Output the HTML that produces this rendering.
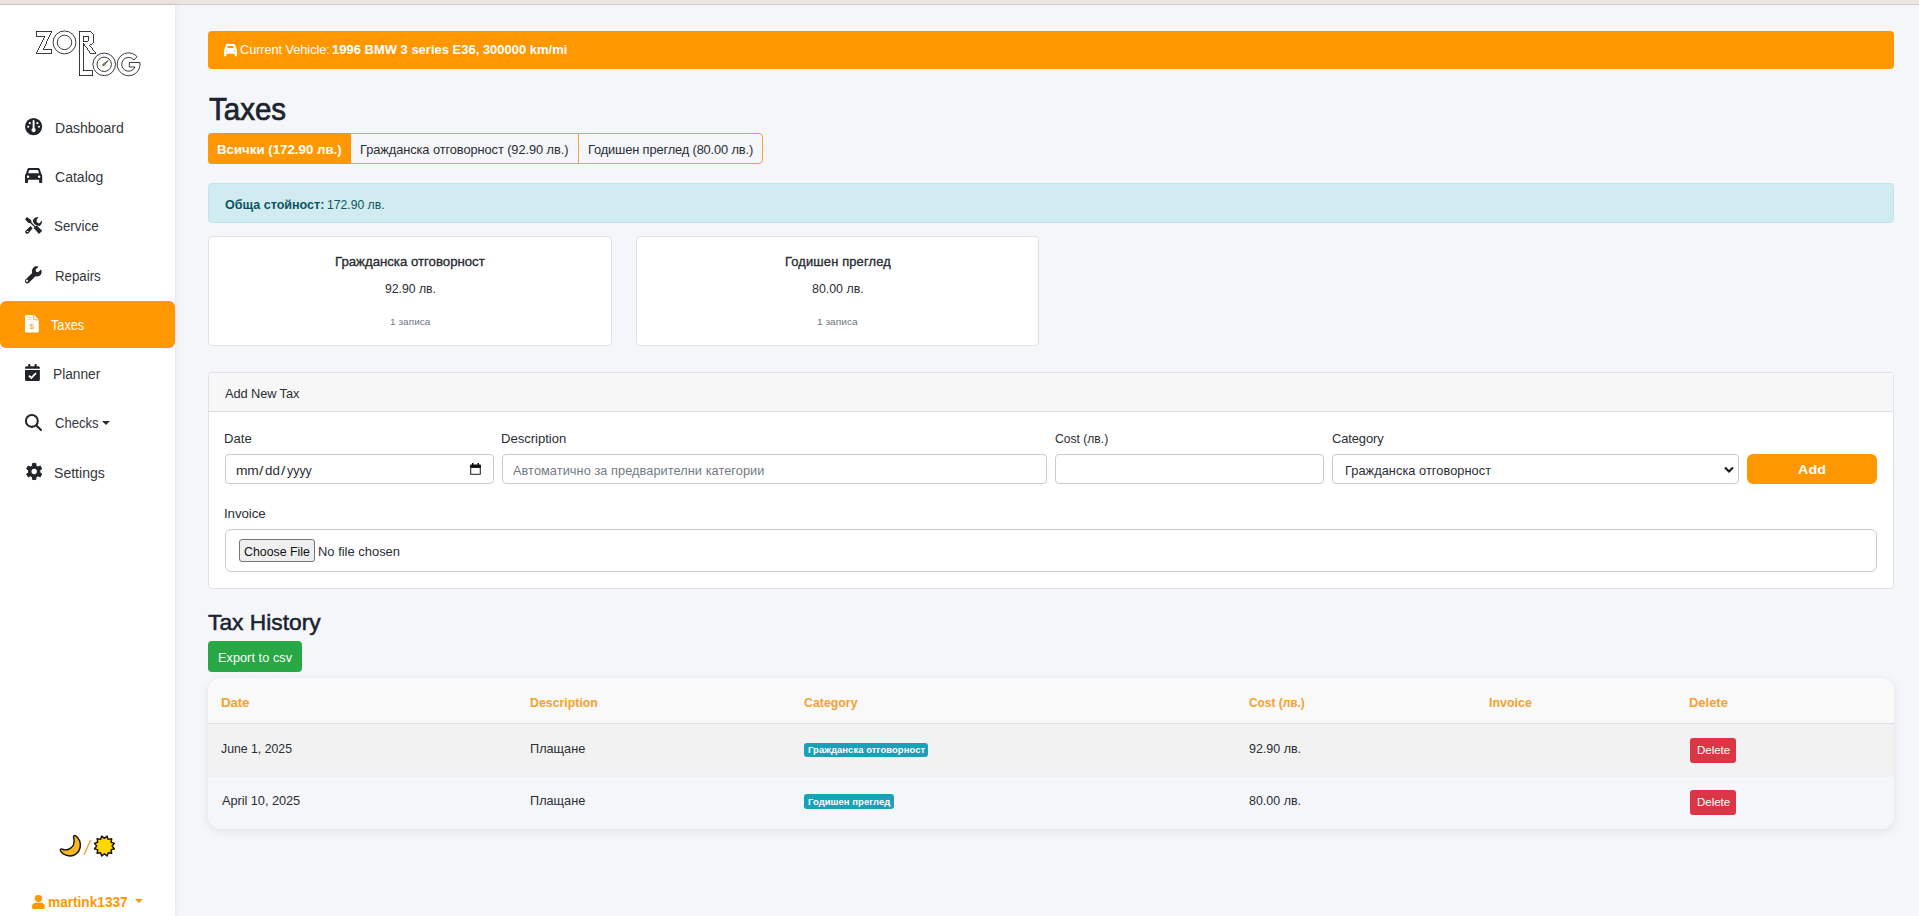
<!DOCTYPE html>
<html lang="en"><head><meta charset="utf-8"><title>Taxes</title>
<style>
*{box-sizing:border-box;margin:0;padding:0}
html,body{width:1919px;height:916px;overflow:hidden;background:#f4f6fa;font-family:"Liberation Sans",sans-serif}
.b{position:absolute}
.i{position:absolute;display:block;overflow:visible}
.t{position:absolute;white-space:pre;line-height:0;transform-origin:0 50%;font-family:"Liberation Sans",sans-serif}
</style></head>
<body>
<div class="b" style="left:0;top:0;width:1919px;height:5px;background:#ece4e1;border-bottom:1px solid #d2cac9"></div>
<div class="b" style="left:0;top:5px;width:175px;height:911px;background:#fff;box-shadow:1px 0 6px rgba(0,0,0,.07)"></div>
<div class="b" style="left:0;top:301px;width:175px;height:47px;background:#ff9800;border-radius:6px"></div>
<div class="b" style="left:208px;top:31px;width:1686px;height:38px;background:#ff9800;border-radius:4px"></div>
<div class="b" style="left:208px;top:133px;width:555px;height:31px;border:1px solid #f3a536;border-radius:4px"></div>
<div class="b" style="left:208px;top:133px;width:143px;height:31px;background:#ff9800;border-radius:4px 0 0 4px"></div>
<div class="b" style="left:578px;top:133px;width:1px;height:31px;background:#f3a536"></div>
<div class="b" style="left:208px;top:183px;width:1686px;height:40px;background:#d1ecf1;border:1px solid #bee5eb;border-radius:4px"></div>
<div class="b" style="left:208px;top:236px;width:404px;height:110px;background:#fff;border:1px solid #e0e2e6;border-radius:4px"></div>
<div class="b" style="left:636px;top:236px;width:403px;height:110px;background:#fff;border:1px solid #e0e2e6;border-radius:4px"></div>
<div class="b" style="left:208px;top:372px;width:1686px;height:217px;background:#fff;border:1px solid #e0e2e6;border-radius:4px;overflow:hidden"><div style="height:39px;background:#f7f7f7;border-bottom:1px solid #dcdfe3"></div></div>
<div class="b" style="left:225px;top:454px;width:269px;height:30px;background:#fff;border:1px solid #c9ccd0;border-radius:4px"></div>
<div class="b" style="left:502px;top:454px;width:545px;height:30px;background:#fff;border:1px solid #c9ccd0;border-radius:4px"></div>
<div class="b" style="left:1055px;top:454px;width:269px;height:30px;background:#fff;border:1px solid #c9ccd0;border-radius:4px"></div>
<div class="b" style="left:1332px;top:454px;width:407px;height:30px;background:#fff;border:1px solid #c9ccd0;border-radius:4px"></div>
<div class="b" style="left:1747px;top:454px;width:130px;height:30px;background:#ff9800;border-radius:6px"></div>
<div class="b" style="left:225px;top:529px;width:1652px;height:43px;background:#fff;border:1px solid #c9ccd0;border-radius:6px"></div>
<div class="b" style="left:239px;top:539px;width:76px;height:23px;background:#efefef;border:1px solid #767676;border-radius:3px"></div>
<svg class="i" style="left:470px;top:463px;width:11px;height:12px" viewBox="0 0 22 24"><path fill="#111" d="M4 0h3v3h8V0h3v3h2a2 2 0 0 1 2 2v5H0V5a2 2 0 0 1 2-2h2z"/><path fill="#4a4a4a" d="M0 9h22v13a2 2 0 0 1-2 2H2a2 2 0 0 1-2-2zM2.6 9.5v11.8h16.8V9.5z"/></svg>
<svg class="i" style="left:1724px;top:465.5px;width:10px;height:7.5px" viewBox="0 0 20 15"><path fill="none" stroke="#1b1b1b" stroke-width="4.4" d="M2 3l8 8 8-8"/></svg>
<div class="b" style="left:208px;top:641px;width:94px;height:31px;background:#28a745;border-radius:4px"></div>
<div class="b" style="left:208px;top:678px;width:1686px;height:151px;border-radius:13px;overflow:hidden;box-shadow:0 2px 10px rgba(0,0,0,.09)"><div style="height:46px;background:#f9f9f9;border-bottom:1px solid #dcdfe3"></div><div style="height:53px;background:#f2f2f2;border-bottom:1px solid #f0f1f3"></div><div style="height:52px;background:#f5f6fa"></div></div>
<div class="b" style="left:804px;top:743px;width:124px;height:14px;background:#17a2b8;border-radius:3px"></div>
<div class="b" style="left:804px;top:794px;width:90px;height:15px;background:#17a2b8;border-radius:3px"></div>
<div class="b" style="left:1690px;top:738px;width:46px;height:25px;background:#dc3545;border-radius:3px"></div>
<div class="b" style="left:1690px;top:790px;width:46px;height:25px;background:#dc3545;border-radius:3px"></div>
<div class="b" style="left:102.3px;top:420.8px;width:0;height:0;border-left:4.1px solid transparent;border-right:4.1px solid transparent;border-top:4.6px solid #2a2e33"></div>
<div class="b" style="left:134.9px;top:898.7px;width:0;height:0;border-left:4px solid transparent;border-right:4px solid transparent;border-top:4.5px solid #ff9800"></div>
<svg class="i" style="left:25.4px;top:117.8px;width:17.2px;height:17.2px;color:#212529" viewBox="0 0 100 100" preserveAspectRatio="none"><circle cx="50" cy="50" r="50" fill="currentColor"/>
<rect x="44.5" y="12" width="11" height="52" rx="5" fill="#fff"/>
<circle cx="50" cy="70" r="12.5" fill="#fff"/>
<circle cx="28" cy="30" r="6.2" fill="#fff"/>
<circle cx="72" cy="30" r="6.2" fill="#fff"/>
<circle cx="18.5" cy="51" r="6.2" fill="#fff"/>
<circle cx="81.5" cy="51" r="6.2" fill="#fff"/></svg>
<svg class="i" style="left:25.4px;top:167.9px;width:17.2px;height:15px;color:#212529" viewBox="10 5 505 455" preserveAspectRatio="none"><path fill="currentColor" d="M125 5H395Q430 5 445 40L490 185Q515 195 515 240V440Q515 460 495 460H445Q425 460 425 440V360H100V440Q100 460 80 460H30Q10 460 10 440V240Q10 195 35 185L80 40Q95 5 125 5Z"/>
<path fill="#fff" class="cw" d="M150 62H375Q390 62 395 77L420 165H105L130 77Q135 62 150 62Z"/>
<circle class="cw" cx="100" cy="270" r="36" fill="#fff"/><circle class="cw" cx="425" cy="270" r="36" fill="#fff"/></svg>
<svg class="i" style="left:25.4px;top:216.9px;width:17.2px;height:17px;color:#212529" viewBox="165 210 525 520" preserveAspectRatio="none"><path fill="currentColor" d="M165 282L228 212L352 308L366 372L330 400L262 388Z"/>
<path stroke="currentColor" stroke-width="40" d="M320 362L480 520"/>
<path fill="currentColor" stroke="currentColor" stroke-width="14" stroke-linejoin="round" d="M436 548L522 470L684 630L594 722Z"/>
<path fill="currentColor" d="M578 215Q470 203 415 290Q385 350 438 408L468 438Q540 470 612 482Q692 420 690 336L655 343Q640 395 585 405Q530 390 515 340Q515 270 578 215Z"/>
<path fill="currentColor" d="M335 486L398 556L268 712Q205 745 175 692Q160 650 192 622Z"/>
<ellipse cx="245" cy="655" rx="30" ry="17" transform="rotate(-8 245 655)" fill="#fff"/></svg>
<svg class="i" style="left:25.4px;top:265.9px;width:17.2px;height:17.2px;color:#212529" viewBox="0 -8 536 528" preserveAspectRatio="none"><path fill="currentColor" d="M507 114c-3-10-15-13-22-6l-74 74-68-11-11-68 74-74c7-7 4-19-6-22C352-5 297 9 258 48c-42 42-53 103-35 156L21 406c-28 28-28 74 0 102s74 28 102 0l202-202c53 18 113 6 156-36 39-39 52-94 26-156zM64 480c-20 0-34-14-34-32s14-32 34-32 34 14 34 32-14 32-34 32z"/></svg>
<svg class="i" style="left:25px;top:314.7px;width:13.8px;height:17.6px;color:#fff" viewBox="0 0 384 512" preserveAspectRatio="none"><path fill="currentColor" d="M232 0H40C18 0 0 18 0 40v432c0 22 18 40 40 40h304c22 0 40-18 40-40V152H256c-14 0-24-10-24-24V0z"/>
<path fill="currentColor" d="M254 2v112c0 8 6 14 14 14h114L254 2z"/>
<rect x="76" y="66" width="92" height="22" rx="6" fill="#ff9800" opacity=".55"/>
<rect x="76" y="124" width="92" height="22" rx="6" fill="#ff9800" opacity=".55"/>
<text x="192" y="408" font-family="Liberation Sans, sans-serif" font-size="230" text-anchor="middle" fill="#ff9800">$</text></svg>
<svg class="i" style="left:25.4px;top:364px;width:14.9px;height:17.1px;color:#212529" viewBox="0 0 448 512" preserveAspectRatio="none"><path fill="currentColor" d="M0 176h448v288c0 26-22 48-48 48H48c-26 0-48-22-48-48V176z"/>
<path fill="currentColor" d="M400 64h-48V16c0-9-7-16-16-16h-32c-9 0-16 7-16 16v48H160V16c0-9-7-16-16-16h-32c-9 0-16 7-16 16v48H48C22 64 0 86 0 112v32h448v-32c0-26-22-48-48-48z"/>
<path fill="none" stroke="#fff" stroke-width="52" stroke-linecap="butt" stroke-linejoin="miter" d="M118 348l72 70 140-142"/></svg>
<svg class="i" style="left:25.4px;top:414px;width:17px;height:17.1px;color:#212529" viewBox="225 215 520 520" preserveAspectRatio="none"><circle cx="435" cy="425" r="182" fill="none" stroke="currentColor" stroke-width="62"/>
<path d="M572 562L714 704" stroke="currentColor" stroke-width="64" stroke-linecap="round"/></svg>
<svg class="i" style="left:25.8px;top:463.2px;width:16.4px;height:16.9px;color:#212529" viewBox="0 0 512 512" preserveAspectRatio="none"><path fill="currentColor" stroke="currentColor" stroke-width="30" stroke-linejoin="round" d="M198.3 87.6 L206.3 11.0 L305.7 11.0 L313.7 87.6 L373.0 121.9 L443.4 90.5 L493.0 176.5 L430.7 221.8 L430.7 290.2 L493.0 335.5 L443.4 421.5 L373.0 390.1 L313.7 424.4 L305.7 501.0 L206.3 501.0 L198.3 424.4 L139.0 390.1 L68.6 421.5 L19.0 335.5 L81.3 290.2 L81.3 221.8 L19.0 176.5 L68.6 90.5 L139.0 121.9Z"/><circle cx="256" cy="256" r="84" fill="#fff"/></svg>
<svg class="i" style="left:32px;top:895px;width:12.8px;height:13.9px;color:#ff9800" viewBox="0 0 448 512" preserveAspectRatio="none"><circle cx="224" cy="128" r="128" fill="currentColor"/>
<path fill="currentColor" d="M134 288h180c74 0 134 60 134 134v42c0 26-22 48-48 48H48c-26 0-48-22-48-48v-42c0-74 60-134 134-134z"/></svg>
<svg class="i" style="left:223.9px;top:43.9px;width:13px;height:12.2px;color:#fff" viewBox="10 5 505 455" preserveAspectRatio="none"><path fill="currentColor" d="M125 5H395Q430 5 445 40L490 185Q515 195 515 240V440Q515 460 495 460H445Q425 460 425 440V372H100V440Q100 460 80 460H30Q10 460 10 440V240Q10 195 35 185L80 40Q95 5 125 5Z"/>
<path fill="#ff9800" d="M165 82H360Q372 82 376 94L392 150H133L149 94Q153 82 165 82Z"/>
<ellipse cx="102" cy="262" rx="20" ry="30" fill="#ff9800" opacity=".8"/><ellipse cx="423" cy="262" rx="20" ry="30" fill="#ff9800" opacity=".8"/></svg>
<svg class="i" style="left:0;top:0;width:175px;height:110px" viewBox="0 0 175 110" fill="#fff" stroke="#0a0a0a" stroke-width=".8" stroke-linejoin="miter">
<path shape-rendering="crispEdges" d="M36 31.2H51.9L43.3 49.3H51.9V53.3H36.2L44.7 36.4H36Z"/>
<circle cx="64.5" cy="42.4" r="11.45"/><circle cx="64.5" cy="42.4" r="7.2"/>
<path shape-rendering="crispEdges" d="M79 31.3H87.7C91.5 31.3 94 34.5 94 38.6C94 42 92.5 44.2 89.8 45.3L95.8 53.3H90.4L83.4 43.2V70.6H92.5V75.6H79Z"/>
<path shape-rendering="crispEdges" d="M83.4 36.2H87.4C88.6 36.2 88.9 37.6 88.9 38.8C88.9 40.3 88.4 41.5 87.4 41.5H83.4Z"/>
<circle cx="104.2" cy="64.35" r="11.3"/><circle cx="104.2" cy="64.3" r="7.2"/>
<path d="M102.3 64.7L108.3 60.5L103.7 66.1Z" fill="#b98a4a" stroke="#1a1208" stroke-width=".55"/>
<path d="M137.07 56.67A11.4 11.4 0 1 0 139.86 62.5H129.3V67H134.95A6.9 6.9 0 1 1 134.04 60.05Z"/>
</svg>
<svg class="i" style="left:59.9px;top:835.4px;width:21.3px;height:21.5px" viewBox="140 150 620 625"><path d="M585 165C700 230 760 380 725 520C690 680 540 780 390 755C280 740 190 680 150 600C140 570 180 545 215 565C330 610 470 560 530 440C560 370 560 290 535 210C525 180 555 150 585 165Z" fill="#f5b825" stroke="#1c1203" stroke-width="42" stroke-linejoin="round"/></svg>
<svg class="i" style="left:0;top:820px;width:175px;height:50px" viewBox="0 820 175 50"><path d="M83.9 855L90.7 839.9" stroke="#f7a83a" stroke-width="1.5"/><path d="M107.07 836.10 L108.25 839.38 L111.68 838.77 L111.07 842.20 L114.35 843.38 L112.10 846.05 L114.35 848.72 L111.07 849.90 L111.68 853.33 L108.25 852.72 L107.07 856.00 L104.40 853.75 L101.73 856.00 L100.55 852.72 L97.12 853.33 L97.73 849.90 L94.45 848.72 L96.70 846.05 L94.45 843.38 L97.73 842.20 L97.12 838.77 L100.55 839.38 L101.73 836.10 L104.40 838.35Z" fill="#ffd600" stroke="#1c1203" stroke-width="1.45" stroke-linejoin="round"/></svg>

<span class="t" id="t0" style="left:54.52px;top:128px;font-size:14.0px;font-weight:400;color:#33373c;letter-spacing:0.000px;transform:scaleX(1.0033)">Dashboard</span>
<span class="t" id="t1" style="left:54.74px;top:177px;font-size:14.0px;font-weight:400;color:#33373c;letter-spacing:0.000px;transform:scaleX(1.0031)">Catalog</span>
<span class="t" id="t2" style="left:54.41px;top:226px;font-size:14.0px;font-weight:400;color:#33373c;letter-spacing:0.000px;transform:scaleX(0.9557)">Service</span>
<span class="t" id="t3" style="left:54.59px;top:276px;font-size:14.0px;font-weight:400;color:#33373c;letter-spacing:0.000px;transform:scaleX(0.9483)">Repairs</span>
<span class="t" id="t4" style="left:51.00px;top:325px;font-size:14.0px;font-weight:400;color:#fff;letter-spacing:0.000px;transform:scaleX(0.9048)">Taxes</span>
<span class="t" id="t5" style="left:52.55px;top:374px;font-size:14.0px;font-weight:400;color:#33373c;letter-spacing:0.000px;transform:scaleX(0.9802)">Planner</span>
<span class="t" id="t6" style="left:54.88px;top:423px;font-size:14.0px;font-weight:400;color:#33373c;letter-spacing:0.000px;transform:scaleX(0.9347)">Checks</span>
<span class="t" id="t7" style="left:54.44px;top:473px;font-size:14.0px;font-weight:400;color:#33373c;letter-spacing:0.000px;transform:scaleX(1.0046)">Settings</span>
<span class="t" id="t8" style="left:47.80px;top:902px;font-size:14px;font-weight:700;color:#ff9800;letter-spacing:0.000px;transform:scaleX(0.9746)">martink1337</span>
<span class="t" id="t9" style="left:239.71px;top:50px;font-size:12.5px;font-weight:400;color:#fff;letter-spacing:-0.063px;transform:scaleX(1.0206)">Current Vehicle:</span>
<span class="t" id="t10" style="left:331.60px;top:50px;font-size:12.5px;font-weight:700;color:#fff;letter-spacing:0.000px;transform:scaleX(1.0390)">1996 BMW 3 series E36, 300000 km/mi</span>
<span class="t" id="t11" style="left:208.66px;top:109px;font-size:32px;font-weight:400;color:#1b2230;letter-spacing:0.000px;transform:scaleX(0.9214);-webkit-text-stroke:0.7px #1b2230">Taxes</span>
<span class="t" id="t12" style="left:216.70px;top:150px;font-size:12.7px;font-weight:700;color:#fff;letter-spacing:0.000px;transform:scaleX(1.0459)">Всички (172.90 лв.)</span>
<span class="t" id="t13" style="left:360.43px;top:150px;font-size:12.7px;font-weight:400;color:#2a2e33;letter-spacing:-0.078px;transform:scaleX(1.0105)">Гражданска отговорност (92.90 лв.)</span>
<span class="t" id="t14" style="left:587.93px;top:150px;font-size:12.7px;font-weight:400;color:#2a2e33;letter-spacing:-0.142px;transform:scaleX(1.0123)">Годишен преглед (80.00 лв.)</span>
<span class="t" id="t15" style="left:225.04px;top:205px;font-size:12.7px;font-weight:700;color:#0c5460;letter-spacing:0.000px;transform:scaleX(0.9886)">Обща стойност:</span>
<span class="t" id="t16" style="left:326.75px;top:205px;font-size:12.7px;font-weight:400;color:#0c5460;letter-spacing:0.000px;transform:scaleX(0.9596)">172.90 лв.</span>
<span class="t" id="t17" style="left:334.74px;top:262px;font-size:12.7px;font-weight:400;color:#2a2e33;letter-spacing:0.000px;transform:scaleX(1.0408);-webkit-text-stroke:0.35px #2a2e33">Гражданска отговорност</span>
<span class="t" id="t18" style="left:384.66px;top:289px;font-size:12.7px;font-weight:400;color:#2a2e33;letter-spacing:0.000px;transform:scaleX(0.9628)">92.90 лв.</span>
<span class="t" id="t19" style="left:389.53px;top:322px;font-size:9.5px;font-weight:400;color:#6c757d;letter-spacing:0.079px;transform:scaleX(1.0462)">1 записа</span>
<span class="t" id="t20" style="left:784.56px;top:262px;font-size:12.7px;font-weight:400;color:#2a2e33;letter-spacing:0.173px;transform:scaleX(1.0127);-webkit-text-stroke:0.35px #2a2e33">Годишен преглед</span>
<span class="t" id="t21" style="left:812.12px;top:289px;font-size:12.7px;font-weight:400;color:#2a2e33;letter-spacing:0.000px;transform:scaleX(0.9769)">80.00 лв.</span>
<span class="t" id="t22" style="left:817.14px;top:322px;font-size:9.5px;font-weight:400;color:#6c757d;letter-spacing:0.000px;transform:scaleX(1.0684)">1 записа</span>
<span class="t" id="t23" style="left:225.04px;top:394px;font-size:12.7px;font-weight:400;color:#2a2e33;letter-spacing:-0.103px;transform:scaleX(1.0114)">Add New Tax</span>
<span class="t" id="t24" style="left:224.21px;top:439px;font-size:12.7px;font-weight:400;color:#2a2e33;letter-spacing:0.000px;transform:scaleX(1.0322)">Date</span>
<span class="t" id="t25" style="left:501.41px;top:439px;font-size:12.7px;font-weight:400;color:#2a2e33;letter-spacing:-0.017px;transform:scaleX(1.0300)">Description</span>
<span class="t" id="t26" style="left:1055.16px;top:439px;font-size:12.7px;font-weight:400;color:#2a2e33;letter-spacing:0.000px;transform:scaleX(0.9541)">Cost (лв.)</span>
<span class="t" id="t27" style="left:1331.82px;top:439px;font-size:12.7px;font-weight:400;color:#2a2e33;letter-spacing:-0.098px;transform:scaleX(1.0174)">Category</span>
<span class="t" id="t28" style="left:235.70px;top:471px;font-size:12.7px;font-weight:400;color:#2a2e33;letter-spacing:-0.341px;transform:scaleX(1.0883)">mm</span>
<span class="t" id="t29" style="left:259.29px;top:471px;font-size:12.7px;font-weight:400;color:#2a2e33;letter-spacing:0.000px;transform:scaleX(1.2500)">/</span>
<span class="t" id="t30" style="left:265.21px;top:471px;font-size:12.7px;font-weight:400;color:#2a2e33;letter-spacing:0.000px;transform:scaleX(1.0503)">dd</span>
<span class="t" id="t31" style="left:280.89px;top:471px;font-size:12.7px;font-weight:400;color:#2a2e33;letter-spacing:0.000px;transform:scaleX(1.2500)">/</span>
<span class="t" id="t32" style="left:286.67px;top:471px;font-size:12.7px;font-weight:400;color:#2a2e33;letter-spacing:0.000px;transform:scaleX(0.9779)">yyyy</span>
<span class="t" id="t33" style="left:512.55px;top:471px;font-size:12.7px;font-weight:400;color:#737b83;letter-spacing:0.064px;transform:scaleX(1.0048)">Автоматично за предварителни категории</span>
<span class="t" id="t34" style="left:1345.13px;top:471px;font-size:12.7px;font-weight:400;color:#2a2e33;letter-spacing:0.033px;transform:scaleX(1.0100)">Гражданска отговорност</span>
<span class="t" id="t35" style="left:1798.34px;top:470px;font-size:13.5px;font-weight:700;color:#fff;letter-spacing:0.125px;transform:scaleX(1.0541)">Add</span>
<span class="t" id="t36" style="left:224.05px;top:514px;font-size:12.7px;font-weight:400;color:#2a2e33;letter-spacing:-0.084px;transform:scaleX(1.0492)">Invoice</span>
<span class="t" id="t37" style="left:244.04px;top:552px;font-size:13px;font-weight:400;color:#111;letter-spacing:0.000px;transform:scaleX(0.9492)">Choose File</span>
<span class="t" id="t38" style="left:318.13px;top:552px;font-size:13px;font-weight:400;color:#2a2e33;letter-spacing:0.000px;transform:scaleX(0.9954)">No file chosen</span>
<span class="t" id="t39" style="left:207.88px;top:623px;font-size:21.5px;font-weight:400;color:#1b2230;letter-spacing:0.000px;transform:scaleX(1.0598);-webkit-text-stroke:0.5px #1b2230">Tax History</span>
<span class="t" id="t40" style="left:217.71px;top:658px;font-size:12.4px;font-weight:400;color:#fff;letter-spacing:0.094px;transform:scaleX(1.0171)">Export to csv</span>
<span class="t" id="t41" style="left:220.90px;top:703px;font-size:12.7px;font-weight:700;color:#f5a030;letter-spacing:-0.200px;transform:scaleX(1.0598)">Date</span>
<span class="t" id="t42" style="left:529.60px;top:703px;font-size:12.7px;font-weight:700;color:#f5a030;letter-spacing:0.000px;transform:scaleX(0.9727)">Description</span>
<span class="t" id="t43" style="left:804.16px;top:703px;font-size:12.7px;font-weight:700;color:#f5a030;letter-spacing:0.000px;transform:scaleX(0.9735)">Category</span>
<span class="t" id="t44" style="left:1249.27px;top:703px;font-size:12.7px;font-weight:700;color:#f5a030;letter-spacing:0.000px;transform:scaleX(0.9367)">Cost (лв.)</span>
<span class="t" id="t45" style="left:1489.00px;top:703px;font-size:12.7px;font-weight:700;color:#f5a030;letter-spacing:0.000px;transform:scaleX(0.9817)">Invoice</span>
<span class="t" id="t46" style="left:1689.00px;top:703px;font-size:12.7px;font-weight:700;color:#f5a030;letter-spacing:0.000px;transform:scaleX(1.0206)">Delete</span>
<span class="t" id="t47" style="left:221.34px;top:749px;font-size:12.7px;font-weight:400;color:#2a2e33;letter-spacing:0.000px;transform:scaleX(0.9679)">June 1, 2025</span>
<span class="t" id="t48" style="left:529.56px;top:749px;font-size:12.7px;font-weight:400;color:#2a2e33;letter-spacing:0.000px;transform:scaleX(1.0018)">Плащане</span>
<span class="t" id="t49" style="left:1249.14px;top:749px;font-size:12.7px;font-weight:400;color:#2a2e33;letter-spacing:0.000px;transform:scaleX(0.9828)">92.90 лв.</span>
<span class="t" id="t50" style="left:221.65px;top:801px;font-size:12.7px;font-weight:400;color:#2a2e33;letter-spacing:-0.069px;transform:scaleX(1.0106)">April 10, 2025</span>
<span class="t" id="t51" style="left:529.56px;top:801px;font-size:12.7px;font-weight:400;color:#2a2e33;letter-spacing:0.000px;transform:scaleX(1.0018)">Плащане</span>
<span class="t" id="t52" style="left:1249.22px;top:801px;font-size:12.7px;font-weight:400;color:#2a2e33;letter-spacing:0.000px;transform:scaleX(0.9826)">80.00 лв.</span>
<span class="t" id="t53" style="left:807.87px;top:750px;font-size:9.4px;font-weight:700;color:#fff;letter-spacing:0.064px;transform:scaleX(1.0076)">Гражданска отговорност</span>
<span class="t" id="t54" style="left:807.87px;top:802px;font-size:9.4px;font-weight:700;color:#fff;letter-spacing:0.048px;transform:scaleX(1.0101)">Годишен преглед</span>
<span class="t" id="t55" style="left:1696.50px;top:750px;font-size:11px;font-weight:400;color:#fff;letter-spacing:-0.059px;transform:scaleX(1.0538)">Delete</span>
<span class="t" id="t56" style="left:1696.50px;top:802px;font-size:11px;font-weight:400;color:#fff;letter-spacing:-0.059px;transform:scaleX(1.0538)">Delete</span>
</body></html>
